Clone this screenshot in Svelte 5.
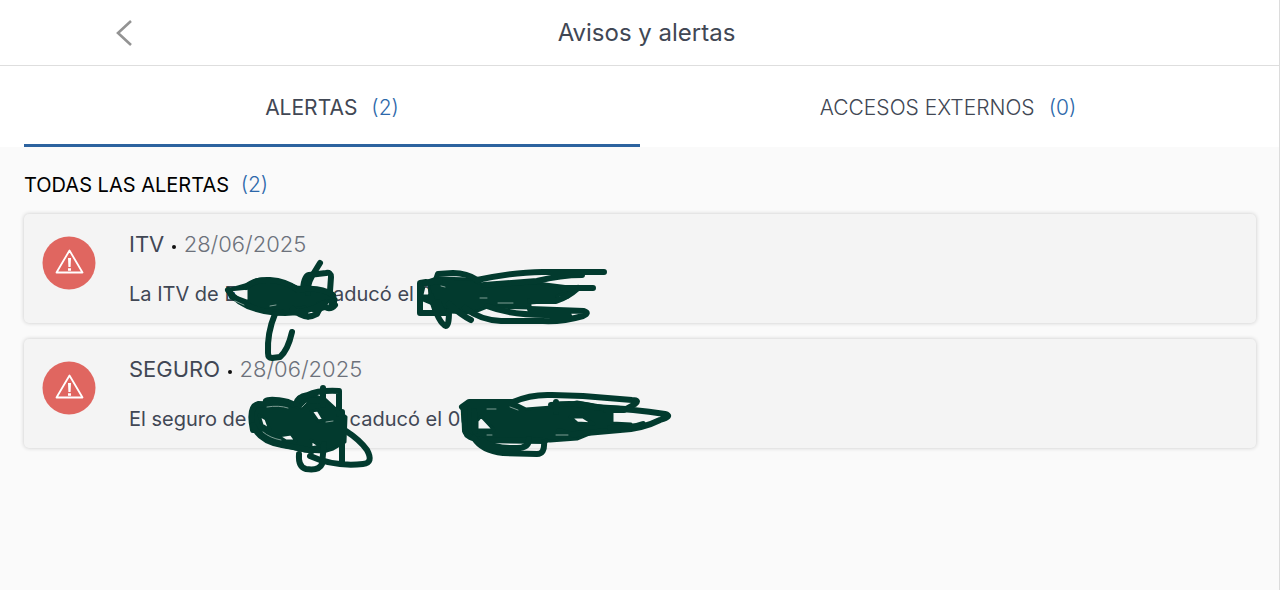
<script>
  const tabs = [
    { label: 'ALERTAS', count: 2, active: true },
    { label: 'ACCESOS EXTERNOS', count: 0, active: false }
  ];

  const alerts = [
    {
      title: 'ITV',
      date: '28/06/2025',
      parts: ['La ITV de E', 'caducó el 0'],
      gap: 85,
      view: '24 214 700 160',
      fills: [
        'M227 290 L238 287 L252 283 Q254 279 262 279 L277 280 L297 287 L323 290 L331 294 L336 299 L335 306 L323 309 L309 316 L292 313 L277 314 L253 308 L231 298 Z M229 290 L249 288 L249 302 L233 296 Z M293 309 L305 307 L305 315 Z M305 308 L318 312 L308 318 Z M318 303 L330 301 L330 309 Z',
        'M425 282 L437 278 L470 279 L484 285 L537 283 L577 288 L568 297 L556 301 L530 303 L530 308 L487 307 L472 313 L450 312 L433 304 L421 299 Z M422 285 L429 284 L430 296 L422 296 Z M557 296 L573 291 L558 301 Z'
      ],
      strokes: [
        'M320 263 L312 276 Q307 285 308 293',
        'M303 289 Q304 276 309 275 L326 273 Q331 272 331 277 L330 291',
        'M246 287 Q254 279 270 280 T298 290 Q319 286 333 295',
        'M228 290 Q240 308 271 312 T325 303 M293 309 Q305 321 317 314 L322 304 Q329 312 335 305',
        'M275 314 Q267 333 268 353 Q268 358 272 358 L280 357 Q288 350 292 332',
        'M426 282 L420 283 L420 313 L447 313 M436 280 L438 274 L453 273 Q467 273 477 280 Q520 271 548 272 L604 272 M582 275 Q561 275 537 281 L484 285',
        'M425 283 L440 281 M563 288 L593 288 M578 288 Q568 297 556 301 L530 301',
        'M530 309 L584 311 Q590 313 583 316 Q562 322 543 321 L501 321 Q480 320 465 308 M487 306 Q510 315 545 315 L569 316',
        'M431 296 Q438 323 446 326 Q449 326 449 311 M438 302 L443 313 M449 304 Q461 315 471 320'
      ],
      glints: [
        'M235 301 L244 305 M270 306 L276 305 M480 298 L487 298 M498 303 L513 303 M441 286 L445 287'
      ]
    },
    {
      title: 'SEGURO',
      date: '28/06/2025',
      parts: ['El seguro de', 'caducó el 01/'],
      gap: 103,
      view: '24 339 700 160',
      fills: [
        'M252 415 L256 406 L266 403 L279 402 L293 406 L299 397 L315 396 L325 399 L338 411 L346 417 L345 442 L333 449 L323 452 L305 451 L278 445 L262 437 L253 428 Z M259 415 L266 419 L270 430 L262 425 Z M278 436 L291 434 L296 441 L286 441 Z M311 411 L318 410 L324 420 L318 421 Z M311 440 L320 446 L311 448 Z',
        'M462 407 L470 402 L512 402 L526 409 L552 407 L577 402 L606 407 L612 412 L612 423 L631 424 L631 430 L594 432 L577 439 L550 441 L483 439 L466 436 L463 421 Z M477 421 L481 416 L494 430 L477 430 Z M570 417 L583 417 L594 424 L577 423 Z'
      ],
      strokes: [
        'M253 430 Q248 407 258 404 L285 405 M266 401 Q270 398 288 402 L300 407',
        'M253 425 Q259 441 282 445 T312 451',
        'M296 404 Q297 397 308 395 Q318 390 339 391 L339 414 M323 388 L323 405 M301 406 Q307 399 318 401',
        'M342 412 L342 462 M346 431 Q360 440 367 450 Q374 463 363 464 Q334 467 310 456',
        'M299 454 Q298 467 306 469 Q319 471 322 464 L324 444',
        'M462 407 L469 402 L513 402 Q531 394 552 395 L583 396 L632 400 Q640 400 635 404 L626 409 L594 407 Q577 402 551 405',
        'M602 408 Q633 409 665 414 Q673 416 660 420 Q642 429 620 430 L575 434',
        'M610 428 Q632 428 643 424 M606 410 L624 410',
        'M464 407 L465 431 Q468 439 482 440 L545 441 M474 411 L475 431',
        'M474 438 Q482 451 503 453 L537 454 Q545 454 544 442 M483 441 Q495 449 517 448 Q529 448 529 439',
        'M559 431 Q573 437 588 432 M556 402 L556 412'
      ],
      glints: [
        'M267 407 Q279 405 288 408 M263 432 Q270 438 281 440 M302 407 L306 403 M326 422 L333 421 M556 435 L568 435 M487 409 L496 409 M510 407 L518 410 M487 435 L492 435'
      ]
    }
  ];
</script>

<main>
  <header>
    <button class="back" aria-label="Volver">
      <svg width="18" height="28" viewBox="0 0 18 28" aria-hidden="true">
        <path d="M16 2 L3 14 L16 26" fill="none" stroke="#939393" stroke-width="2.6" />
      </svg>
    </button>
    <h1>Avisos y alertas</h1>
  </header>

  <nav>
    {#each tabs as tab}
      <button class="tab" class:active={tab.active}>
        <span>{tab.label}</span>
        <span class="count">({tab.count})</span>
      </button>
    {/each}
  </nav>

  <section>
    <h2>TODAS LAS ALERTAS <span class="count">({alerts.length})</span></h2>
    <div class="list">
      {#each alerts as alert}
        <article>
          <svg class="badge" viewBox="0 0 54 54" aria-hidden="true">
            <circle cx="27" cy="27" r="26.5" fill="#e06660" />
            <path d="M27.5 14.5 L40.5 36.5 H14.5 Z" fill="none" stroke="#fff" stroke-width="1.8" stroke-linejoin="round" />
            <path d="M26 22 H29 L28.6 31 H26.4 Z M26 32.2 H29 V34.8 H26 Z" fill="#fff" />
          </svg>
          <div class="body">
            <h3>{alert.title} <i></i> <time>{alert.date}</time></h3>
            <p>{alert.parts[0]}<span class="gap" style:width="{alert.gap}px"></span>{alert.parts[1]}</p>
          </div>
          <svg class="ink" viewBox={alert.view} aria-hidden="true">
            {#each alert.fills as d}
              <path {d} class="blot" />
            {/each}
            {#each alert.strokes as d}
              <path {d} class="pen" />
            {/each}
            {#each alert.glints as d}
              <path {d} class="glint" />
            {/each}
          </svg>
        </article>
      {/each}
    </div>
  </section>
</main>

<style>
  :global(body) {
    margin: 0;
    background: #fafafa;
  }
  main {
    box-sizing: border-box;
    min-height: 100vh;
    border-right: 1px solid #dcdcdc;
    background: #fafafa;
    color: #414754;
    font-family: Inter, "Liberation Sans", sans-serif;
  }
  button {
    border: 0;
    padding: 0;
    background: none;
    color: inherit;
    font: inherit;
    cursor: pointer;
  }
  h1, h2, h3, p {
    margin: 0;
    font-weight: 400;
  }
  header {
    display: grid;
    grid-template-columns: 1fr auto 1fr;
    align-items: center;
    height: 65px;
    padding: 0 0 0 14px;
    background: #fff;
    border-bottom: 1px solid #dedede;
  }
  .back {
    display: flex;
    justify-self: start;
    margin-left: 101px;
  }
  h1 {
    font-size: 24px;
    line-height: 32px;
  }
  nav {
    display: flex;
    height: 81px;
    padding: 0 23px 0 24px;
    background: #fff;
  }
  .tab {
    flex: 1;
    display: flex;
    justify-content: center;
    align-items: center;
    gap: 14px;
    padding-top: 4px;
    border-bottom: 3px solid transparent;
    font-size: 21px;
    font-weight: 300;
  }
  .tab.active {
    border-bottom-color: #2d639f;
    font-weight: 400;
  }
  .count {
    color: #2d68aa;
    font-weight: 300;
  }
  section {
    padding: 22px 23px 24px 24px;
  }
  h2 {
    margin-bottom: 13px;
    color: #000;
    font-size: 20px;
    line-height: 32px;
  }
  h2 .count {
    margin-left: 6px;
    font-size: 21px;
  }
  .list {
    display: flex;
    flex-direction: column;
    gap: 16px;
  }
  article {
    position: relative;
    display: flex;
    gap: 33px;
    padding: 14px 18px 13px;
    border-radius: 5px;
    background: #f4f4f4;
    box-shadow: 0 0 4px rgba(0, 0, 0, 0.2);
  }
  article:first-child {
    z-index: 1;
  }
  .badge {
    flex: none;
    width: 54px;
    height: 54px;
    margin-top: 8px;
  }
  .body {
    display: flex;
    flex-direction: column;
    gap: 18px;
    white-space: nowrap;
  }
  h3 {
    font-size: 22px;
    line-height: 32px;
  }
  h3 i {
    display: inline-block;
    width: 4px;
    height: 4px;
    margin: 0 1px 3px 2px;
    border-radius: 50%;
    background: #111;
  }
  time {
    color: #6c717b;
    font-weight: 300;
  }
  p {
    font-size: 20px;
    line-height: 32px;
  }
  .gap {
    display: inline-block;
  }
  .ink {
    position: absolute;
    top: 0;
    left: 0;
    width: 700px;
    height: 160px;
    pointer-events: none;
  }
  .blot {
    fill: #023a2e;
    fill-rule: evenodd;
    stroke: #023a2e;
    stroke-width: 3;
    stroke-linejoin: round;
  }
  .pen {
    fill: none;
    stroke: #023a2e;
    stroke-width: 6;
    stroke-linecap: round;
    stroke-linejoin: round;
  }
  .glint {
    fill: none;
    stroke: #7f9d94;
    stroke-width: 1;
    stroke-linecap: round;
  }
</style>
